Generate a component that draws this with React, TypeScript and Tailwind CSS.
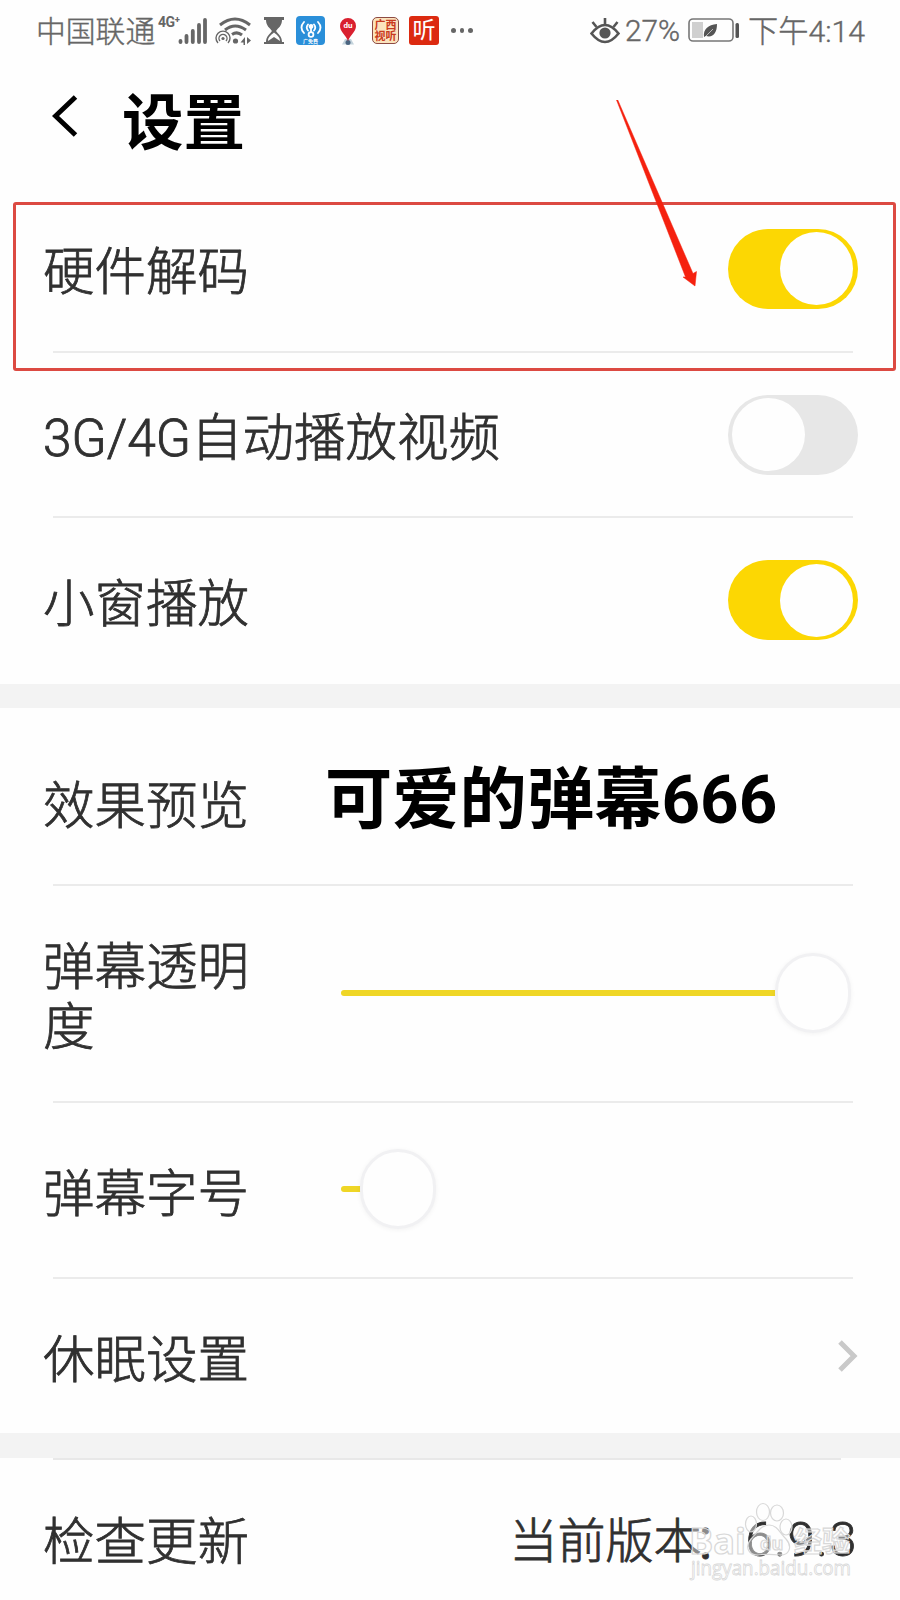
import { ReactNode } from "react";

interface SettingRowProps {
  label: string;
  className: string;
  children?: ReactNode;
}

const Divider = () => <div className="ml-[53px] h-0.5 w-[800px] shrink-0 bg-[#ebebeb]" />;

const SettingRow = ({ label, className, children }: SettingRowProps) => (
  <div className={`flex shrink-0 items-center pl-[43px] pr-[42px] ${className}`}>
    <span className="pt-[9px] text-[51.5px] leading-[60px] font-light [-webkit-text-stroke:0.8px_#303030]">{label}</span>
    {children}
  </div>
);

const Toggle = ({ on }: { on: boolean }) =>
  on ? (
    <div className="ml-auto flex h-20 w-[130px] items-center justify-end rounded-full bg-[#fcd703] pr-[5px]">
      <div className="size-[73px] rounded-full bg-[#fefefe]" />
    </div>
  ) : (
    <div className="ml-auto flex h-20 w-[130px] items-center rounded-full bg-[#e7e7e7] pl-[4px]">
      <div className="size-[73px] rounded-full bg-[#fefefe]" />
    </div>
  );

const Slider = ({ value }: { value: number }) => (
  <div className="mt-[-2px] flex items-center">
    <div className="h-[6px] rounded-l-full bg-[#efd626]" style={{ width: value }} />
    <div className="-ml-[3px] h-[80px] w-[76px] rounded-full border-[3px] border-[#f1f1f3] bg-[#fefefe] shadow-[0_1px_5px_rgba(0,0,0,0.05)]" />
  </div>
);

const SignalIcon = () => (
  <svg className="ml-[-3px] h-[28px] w-[30px]" viewBox="0 0 30 28" stroke="#666" strokeWidth="3.8" strokeLinecap="round">
    <path d="M2.500 24v1M8.500 19v6M14.800 14v11M21 8v17M27 3v22" />
  </svg>
);

const WifiIcon = () => (
  <svg className="ml-[7px] h-[28px] w-[38px]" viewBox="0 0 38 28" fill="none" stroke="#666" strokeWidth="3">
    <path d="M5 8Q20-4 35 8" />
    <path d="M10 13Q20 5 31 13" />
    <path d="M17 17.500Q22 14 27 18" />
    <g strokeWidth="1.4">
      <path d="M3 26a7 7 0 1 1 10 0" />
      <path d="M5 24a4 4 0 1 1 6 0" />
    </g>
    <circle cx="8" cy="21.500" r="1.600" fill="#666" stroke="none" />
    <circle cx="20.500" cy="24" r="2.600" fill="#666" stroke="none" />
    <path d="M30 20v8h-1.500v-2.500H25.500zM32 20v7l4-3.500z" fill="#666" stroke="none" />
  </svg>
);

const HourglassIcon = () => (
  <svg className="ml-[10px] h-[28px] w-[22px]" viewBox="0 0 22 28" fill="#666">
    <path d="M1 0h20v3h-2c0 6-4 8-6 11 2 3 6 5 6 11h2v2H1v-2h2c0-6 4-8 6-11-2-3-6-5-6-11H1z" />
    <path d="M5 24c0-4 3-6 6-8.500C14 18 17 20 17 24l-6-4z" fill="#fefefe" />
  </svg>
);

const HotspotAppIcon = () => (
  <div className="ml-[11px] flex h-[29px] w-[29px] flex-col items-center rounded-[4px] bg-[#2a8fd9] pt-[5px]">
    <svg className="h-[18px] w-[24px]" viewBox="0 0 24 18" fill="none" stroke="#fff" strokeWidth="1.8" strokeLinecap="round">
      <path d="M5 1Q0 6.500 5 12M9 3.500Q6.500 6.500 9 9.500M19 1q5 5.500 0 11M15 3.500q2.500 3 0 6M12 7v4" />
      <circle cx="12" cy="5.500" r="1.500" fill="#fff" />
      <circle cx="12" cy="13.500" r="2.400" />
    </svg>
    <span className="text-[5px] leading-[5px] font-bold text-white">广免费</span>
  </div>
);

const MapPinAppIcon = () => (
  <div className="relative ml-[9px] h-[29px] w-[28px]">
    <svg className="h-full w-full" viewBox="0 0 28 29">
      <path d="M8 28.500l3-5.500h6l3 5.500z" fill="#c3d3dc" />
      <circle cx="14" cy="26.500" r="2.500" fill="#4a6580" />
      <path d="M14 25C12 19 6 16 6 10a8 8 0 0 1 16 0C22 16 16 19 14 25z" fill="#d9202f" />
    </svg>
    <span className="absolute inset-x-0 top-[5px] text-center text-[8px] leading-[9px] font-bold text-white">du</span>
  </div>
);

const EyeIcon = () => (
  <svg className="h-[28px] w-[30px]" viewBox="0 0 30 28" fill="none" stroke="#555" strokeWidth="2.600">
    <path d="M1.500 17Q15 0 28.500 17 15 34 1.500 17z" transform="translate(0 -0.500)" />
    <path d="M15 7V1M6.500 10L2.500 5M23.500 10l4-5" />
    <circle cx="15" cy="16" r="5.600" fill="#555" stroke="none" />
  </svg>
);

const BatteryIcon = () => (
  <svg className="ml-[8px] h-[25px] w-[52px]" viewBox="0 0 52 25">
    <rect x="1" y="1" width="44" height="22" rx="4" fill="none" stroke="#777" strokeWidth="1.600" />
    <rect x="4" y="4" width="11" height="16" fill="#d0d0d0" />
    <path d="M16 19c-1-8 4-12 13-13 0 9-4 14-11 12z" fill="#555" />
    <path d="M17 19l8-8" stroke="#fefefe" strokeWidth="0.600" />
    <rect x="47.500" y="5" width="3.500" height="15" rx="1.500" fill="#555" />
  </svg>
);

const StatusBar = () => (
  <div className="flex h-[61px] shrink-0 items-center pl-[36px] text-[29.800px] leading-[36px] font-light text-[#666] [-webkit-text-stroke:0.4px_#666]">
    <span className="w-[118px] pt-[3px] whitespace-nowrap">中国联通</span>
    <span className="mt-[-17px] ml-[4px] w-[23px] text-[14px] leading-[14px] font-bold tracking-[-0.5px] whitespace-nowrap [-webkit-text-stroke:0px]">4G⁺</span>
    <SignalIcon />
    <WifiIcon />
    <HourglassIcon />
    <div className="flex items-center [-webkit-text-stroke:0px]">
      <HotspotAppIcon />
      <MapPinAppIcon />
      <div className="ml-[10px] flex h-[27px] w-[27px] flex-col items-center justify-center rounded-[5px] border border-[#8d4a42] bg-[#fbe3bd] text-[11px] leading-[11px] font-bold text-[#c93a20]">
        <span>广西</span>
        <span>视听</span>
      </div>
      <div className="ml-[10px] flex h-[29px] w-[30px] items-center justify-center rounded-[3px] bg-[#dc2a10] text-[23px] leading-[26px] font-normal text-white">
        <span>听</span>
      </div>
    </div>
    <div className="ml-[12px] flex gap-[4px]">
      <i className="size-[4.500px] rounded-full bg-[#666]" />
      <i className="size-[4.500px] rounded-full bg-[#666]" />
      <i className="size-[4.500px] rounded-full bg-[#666]" />
    </div>
    <div className="ml-auto flex items-center pr-[35px]">
      <EyeIcon />
      <span className="ml-[5px] pt-px">27%</span>
      <BatteryIcon />
      <span className="ml-[8px] pt-[3px] text-[30.200px]">下午4:14</span>
    </div>
  </div>
);

const Watermark = () => (
  <svg className="absolute top-[1500px] left-[688px] h-[84px] w-[180px]" viewBox="0 0 180 84" fill="#fff" fillOpacity="0.45" stroke="#d8d8d8" strokeWidth="1.2">
    <ellipse cx="75" cy="12" rx="6.500" ry="8.500" />
    <ellipse cx="89" cy="13" rx="6.500" ry="8" />
    <ellipse cx="63" cy="24" rx="5.500" ry="8" />
    <ellipse cx="98" cy="27" rx="6" ry="8" />
    <path d="M81 25c8 0 11 8 17 14 7 8 3 17-7 16-7-1-13-1-20 0-10 1-15-8-8-16 6-6 10-14 18-14z" />
    <g fontFamily="Open Sans, Noto Sans CJK SC, sans-serif" fontWeight="bold">
      <text x="1" y="54" fontSize="36" textLength="57" lengthAdjust="spacingAndGlyphs">Bai</text>
      <text x="72" y="50" fontSize="18" fill="none">du</text>
      <text x="106" y="52" fontSize="28">经验</text>
    </g>
    <text x="3" y="75" fontSize="20" fontFamily="Open Sans, sans-serif" textLength="160" lengthAdjust="spacingAndGlyphs" strokeWidth="0.8">jingyan.baidu.com</text>
  </svg>
);

export default function App() {
  return (
    <div className="relative flex h-[1600px] w-[900px] flex-col overflow-hidden bg-[#fefefe] font-[Roboto,'Noto_Sans_CJK_SC',sans-serif] text-[#303030]">
      <StatusBar />

      <div className="flex h-[121px] shrink-0 items-center pl-[52px]">
        <svg className="mt-[-11px] h-[42px] w-[26px]" viewBox="0 0 26 42" fill="none" stroke="#000" strokeWidth="5">
          <path d="M23.500 2L3.500 21l20 19" />
        </svg>
        <h1 className="ml-[44px] pt-[4px] text-[61.500px] leading-[72px] font-bold text-black">设置</h1>
      </div>

      <SettingRow label="硬件解码" className="h-[169px] pt-1">
        <Toggle on />
      </SettingRow>
      <Divider />
      <SettingRow label="3G/4G自动播放视频" className="h-[163px]">
        <Toggle on={false} />
      </SettingRow>
      <Divider />
      <SettingRow label="小窗播放" className="h-[166px] pb-0.5">
        <Toggle on />
      </SettingRow>
      <div className="h-6 shrink-0 bg-[#f3f3f3]" />

      <SettingRow label="效果预览" className="h-[176px] pt-3">
        <span className="mt-[-5px] ml-[76px] text-[67.300px] leading-[80px] font-bold text-black">可爱的弹幕666</span>
      </SettingRow>
      <Divider />
      <div className="flex h-[215px] shrink-0 items-center pl-[43px]">
        <span className="w-[231px] pt-[9px] text-[51.500px] leading-[60px] font-light [-webkit-text-stroke:0.8px_#303030]">弹幕透明度</span>
        <div className="ml-[67px]">
          <Slider value={437} />
        </div>
      </div>
      <Divider />
      <SettingRow label="弹幕字号" className="h-[174px]">
        <div className="ml-[92px]">
          <Slider value={22} />
        </div>
      </SettingRow>
      <Divider />
      <SettingRow label="休眠设置" className="h-[154px]">
        <svg className="ml-auto h-[32px] w-[20px]" viewBox="0 0 20 32" fill="none" stroke="#c9c9c9" strokeWidth="5">
          <path d="M2 2l14 14L2 30" />
        </svg>
      </SettingRow>
      <div className="h-[25px] shrink-0 bg-[#f3f3f3]" />
      <div className="ml-[53px] h-0.5 w-[788px] shrink-0 bg-[#e8e8e8]" />

      <SettingRow label="检查更新" className="h-[140px] pt-4">
        <span className="ml-auto flex pt-[7px] text-[48px] leading-[60px] font-light whitespace-nowrap [-webkit-text-stroke:0.8px_#303030]">
          <span>当前版本</span>
          <span className="-ml-2 w-[52px]">：</span>
          <span className="mt-[-2px] text-[49px] tracking-[1.5px]">6.9.3</span>
        </span>
      </SettingRow>

      {/* Highlighted option */}
      <div className="absolute top-[202px] left-[13px] h-[169px] w-[883px] rounded-[3px] border-[3px] border-[#dc4a42]" />
      <svg className="absolute top-[100px] left-[616px] h-[188px] w-[82px]" viewBox="0 0 82 188" fill="#f5210f" stroke="#f5210f" strokeWidth="0.500">
        <path d="M.5 0L69.500 177 67 177 79 186 80.500 171.500 77 173.500 1.800 0z" />
      </svg>
      <Watermark />
    </div>
  );
}
